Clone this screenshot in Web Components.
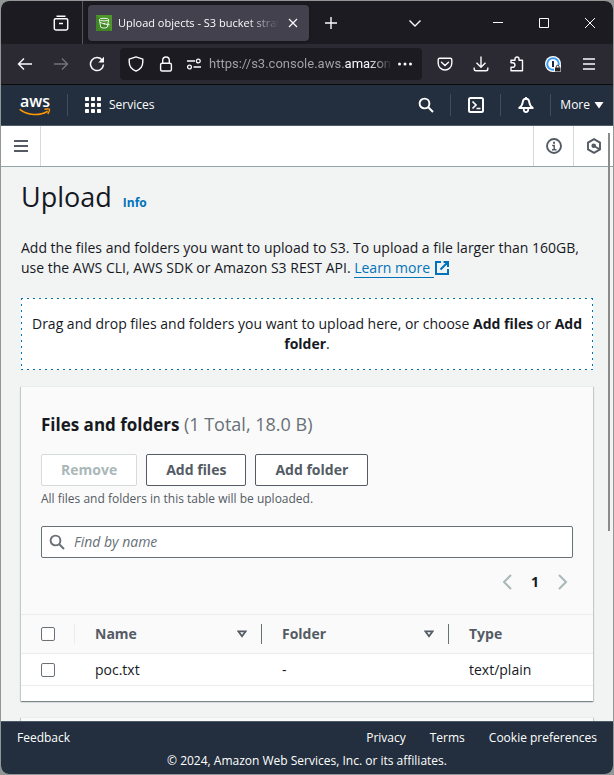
<!DOCTYPE html>
<html lang="en">
<head>
<meta charset="utf-8">
<meta name="viewport" content="width=device-width, initial-scale=1">
<title>Upload objects - S3 bucket</title>
<style>
    html {
        height: 100%;
    }
    body {
        margin: 0;
        padding: 1px;
        box-sizing: border-box;
        height: 100vh;
        background: #929694;
        font-family: "Open Sans", "Noto Sans", sans-serif;
        font-size: 14px;
        line-height: 20px;
        color: #16191f;
        overflow: hidden;
    }
</style>
</head>
<body>
<browser-window>
    <tab-strip slot="chrome"></tab-strip>
    <tool-bar slot="chrome"></tool-bar>
    <aws-nav slot="chrome"></aws-nav>
    <crumb-bar slot="chrome"></crumb-bar>
    <upload-page></upload-page>
    <aws-footer slot="footer"></aws-footer>
</browser-window>

<script>
const ICONS = {
    archive: ['0 0 16 16', `<path d="M3.5 1.2h9M2.5 3.8h11a1.2 1.2 0 0 1 1.2 1.2v8.2a1.8 1.8 0 0 1-1.8 1.8H3.1a1.8 1.8 0 0 1-1.8-1.8V5a1.2 1.2 0 0 1 1.2-1.2zM6 8.5h4" stroke-width="1.5"/>`],
    bucket: ['0 0 16 16', `<rect width="16" height="16" fill="#3f8624" stroke="none"/><path d="M16 0v16L0 0z" fill="#6cae3e" stroke="none" opacity=".4"/><ellipse cx="8" cy="4.6" rx="4.6" ry="1.3" stroke-width=".9"/><path d="M3.4 4.8l1.3 7.4c.8 1.1 5.8 1.1 6.6 0l1.3-7.4M4 7.4l4.5 1.6M11.8 8.8c2 .8 2 1.3-.2.8l-3-.8" stroke-width=".9"/><circle cx="8.3" cy="8.8" r=".8" fill="#fff" stroke="none"/>`],
    x: ['0 0 16 16', `<path d="M4 4l8 8M12 4l-8 8" stroke-width="1.2"/>`],
    plus: ['0 0 16 16', `<path d="M8 2v12M2 8h12" stroke-width="1.4"/>`],
    chevron: ['0 0 16 16', `<path d="M2.5 5.5L8 11l5.5-5.5" stroke-width="1.4"/>`],
    min: ['0 0 16 16', `<path d="M3 7.5h10" stroke-width="1"/>`],
    max: ['0 0 16 16', `<path d="M3.5 3.5h9v9h-9z" stroke-width="1"/>`],
    shut: ['0 0 16 16', `<path d="M3 3l10 10M13 3L3 13" stroke-width="1"/>`],
    back: ['0 0 16 16', `<path d="M15 8H1.5M7 2.5L1.5 8 7 13.5" stroke-width="1.4"/>`],
    forward: ['0 0 16 16', `<path d="M1 8h13.5M9 2.5L14.5 8 9 13.5" stroke-width="1.4"/>`],
    reload: ['0 0 16 16', `<path d="M13.4 4.4A6.5 6.5 0 1 0 14.5 8.5" stroke-width="1.5"/><path d="M15 .8v5.7H9.3z" fill="currentColor" stroke="none"/>`],
    shield: ['0 0 16 16', `<path d="M8 .9l6.8 2.3v2.6c0 4.3-2.5 7.7-6.8 9.4C3.7 13.5 1.2 10.1 1.2 5.8V3.2z" stroke-width="1.4" stroke-linejoin="round"/>`],
    lock: ['0 0 16 16', `<rect x="2.6" y="7.2" width="10.8" height="7.8" rx="1.5" stroke-width="1.4"/><path d="M4.7 7V4.3a3.3 3.3 0 0 1 6.6 0V7" stroke-width="1.4"/>`],
    perms: ['0 0 16 16', `<path d="M1 5h8M7.5 11H15" stroke-width="1.4"/><circle cx="12.3" cy="5" r="1.9" stroke-width="1.3"/><circle cx="3.5" cy="11" r="1.9" stroke-width="1.3"/>`],
    dots: ['0 0 16 16', `<g fill="currentColor" stroke="none"><circle cx="2.5" cy="8" r="1.5"/><circle cx="8" cy="8" r="1.5"/><circle cx="13.5" cy="8" r="1.5"/></g>`],
    pocket: ['0 0 16 16', `<path d="M2.7 2.2h10.6a1.5 1.5 0 0 1 1.5 1.5v3.5a6.8 6.8 0 0 1-13.6 0V3.7a1.5 1.5 0 0 1 1.5-1.5zM4.5 6.2L8 9.5l3.5-3.3" stroke-width="1.4" stroke-linecap="round"/>`],
    download: ['0 0 16 16', `<path d="M8 .5v10.500M3.5 6.700L8 11.200l4.500-4.500M1.200 11.500V13a1.800 1.800 0 0 0 1.800 1.800h10a1.800 1.800 0 0 0 1.800-1.800v-1.500" stroke-width="1.4"/>`],
    puzzle: ['0 0 16 16', `<path d="M2 6.800V4.300h4V3a2 2 0 0 1 4 0v1.300h3.500v10.500H2v-3.500h1.700a2 2 0 0 0 0-4.500H2z" stroke-width="1.4" stroke-linejoin="round"/>`],
    onepass: ['0 0 16 16', `<circle cx="8" cy="8" r="8" fill="#fff" stroke="none"/><circle cx="8" cy="8" r="5.8" stroke="#3b9cf5" stroke-width="2"/><path d="M8 5v6" stroke="#1a2b49" stroke-width="2"/><rect x="9" y="9" width="7" height="7" rx="1" fill="#fff" stroke="none"/><rect x="10" y="11.5" width="5.5" height="4" fill="#222" stroke="none"/><path d="M11.3 11.5v-.8a1.400 1.400 0 0 1 2.800 0v.8" stroke="#222" stroke-width="1"/>`],
    menu: ['0 0 16 16', `<path d="M2 3h12M2 8h12M2 13h12" stroke-width="1.4"/>`],
    grid: ['0 0 16 16', `<g fill="currentColor" stroke="none"><rect width="4" height="4" rx=".8"/><rect x="6" width="4" height="4" rx=".8"/><rect x="12" width="4" height="4" rx=".8"/><rect y="6" width="4" height="4" rx=".8"/><rect x="6" y="6" width="4" height="4" rx=".8"/><rect x="12" y="6" width="4" height="4" rx=".8"/><rect y="12" width="4" height="4" rx=".8"/><rect x="6" y="12" width="4" height="4" rx=".8"/><rect x="12" y="12" width="4" height="4" rx=".8"/></g>`],
    search: ['0 0 16 16', `<circle cx="6.5" cy="6.5" r="4.9" stroke-width="1.9"/><path d="M10 10l5 5" stroke-width="2"/>`],
    terminal: ['0 0 16 16', `<rect x="1" y="1" width="14" height="14" rx="1.5" stroke-width="2"/><path d="M4.5 4.5L8 8l-3.5 3.5M8.5 11.5h4" stroke-width="1.7"/>`],
    bell: ['0 0 16 16', `<path d="M8 1.8c-2 0-3 1.300-3.200 3C4.500 7.800 3.500 9.300 1.200 11h13.600c-2.300-1.700-3.300-3.200-3.600-6.200C11 3.100 10 1.800 8 1.800z" stroke-width="1.9" stroke-linejoin="round"/><path d="M5.8 11.5v1.300a2.200 2.200 0 0 0 4.400 0v-1.300M8 0v2" stroke-width="1.8"/>`],
    caret: ['0 0 10 8', `<path d="M.5 1h9L5 7.5z" fill="currentColor" stroke="none"/>`],
    bars: ['0 0 16 16', `<path d="M1 3h14M1 8h14M1 13h14" stroke-width="2"/>`],
    info: ['0 0 16 16', `<circle cx="8" cy="8" r="7" stroke-width="1.9"/><path d="M6.2 7.5h2V12M6 11.7h4.5" stroke-width="1.5"/><path d="M7 3.7h2v2H7z" fill="currentColor" stroke="none"/>`],
    hexagon: ['0 0 16 16', `<path d="M8 1.2l6 3.4v6.8l-6 3.4-6-3.4V4.6z" stroke-width="1.9"/><circle cx="7.7" cy="7.7" r="2.3" fill="currentColor" stroke="none"/><path d="M8 8l5.5 3.2" stroke-width="1.8"/>`],
    external: ['0 0 16 16', `<path d="M7 2H2v12h12V9M9.5 2H14v5M14 2L6.5 9.5" stroke-width="2"/>`],
    sort: ['0 0 10 8', `<path d="M1.3 1.3h7.4L5 6.3z" stroke-width="1.8"/>`],
    left: ['0 0 16 16', `<path d="M12 1L5 8l7 7" stroke-width="2"/>`],
    right: ['0 0 16 16', `<path d="M4 1l7 7-7 7" stroke-width="2"/>`],
    smile: ['0 0 32 8', `<g stroke="#f90" stroke-width="1.6"><path d="M.7 1.3C9 7.8 20.5 8 28.7 3.2"/><path d="M25.5 1.3c2.5-.5 4.8-.5 5 .1.2.8-.7 3-1.8 4.6" stroke-width="1.4"/></g>`]
};

class UiIcon extends HTMLElement {
    constructor() {
        super();
        this.attachShadow({mode: 'open'});
    }

    connectedCallback() {
        const [box, shapes] = ICONS[this.getAttribute('name')];
        this.shadowRoot.innerHTML = `
        <style>
        :host {
            display: inline-block;
            flex: none;
            width: 16px;
            height: 16px;
        }
        svg {
            display: block;
            width: 100%;
            height: 100%;
        }
        </style>
        <svg viewBox="${box}" fill="none" stroke="currentColor" aria-hidden="true">${shapes}</svg>
        `;
    }
}
customElements.define('ui-icon', UiIcon);

// resets shared by the elements below
const BASE = `
    :host, * {
        box-sizing: border-box;
    }
    button {
        margin: 0;
        padding: 0;
        border: 0;
        background: none;
        font: inherit;
        color: inherit;
        display: flex;
        align-items: center;
        justify-content: center;
    }
    a {
        color: inherit;
        text-decoration: none;
    }
`;

function define(name, css, html) {
    const template = document.createElement('template');
    template.innerHTML = `<style>${BASE}${css}</style>${html}`;
    customElements.define(name, class extends HTMLElement {
        constructor() {
            super();
            this.attachShadow({mode: 'open'}).append(template.content.cloneNode(true));
        }
    });
}

define('browser-window', `
    :host {
        position: relative;
        display: flex;
        flex-direction: column;
        height: 100%;
        border-radius: 8px;
        overflow: hidden;
        background: #f2f3f3;
    }
    main {
        flex: 1;
        min-height: 0;
        overflow: hidden;
    }
    .thumb {
        position: absolute;
        top: 132px;
        right: 3px;
        width: 2px;
        height: 398px;
        background: #8b8b8b;
    }
`, `
    <slot name="chrome"></slot>
    <main><slot></slot></main>
    <slot name="footer"></slot>
    <div class="thumb"></div>
`);

define('tab-strip', `
    :host {
        display: flex;
        align-items: center;
        height: 43px;
        background: #1c1b22;
        color: #fbfbfe;
        font-size: 11px;
    }
    .recent {
        width: 82px;
        height: 100%;
        padding-left: 38px;
        border-right: 1px solid #55545c;
    }
    .tab {
        display: flex;
        align-items: center;
        width: 221px;
        height: 36px;
        margin-left: 5px;
        padding: 0 8px;
        gap: 6px;
        border-radius: 4px;
        background: #42414d;
        box-shadow: 0 0 3px #0006;
    }
    .title {
        flex: 1;
        overflow: hidden;
        white-space: nowrap;
        mask-image: linear-gradient(to left, transparent, #000 32px);
    }
    .new {
        margin-left: 14px;
    }
    .list {
        margin-left: auto;
        margin-right: 52px;
    }
    .win {
        width: 46px;
        height: 100%;
    }
`, `
    <button class="recent" aria-label="Recent browsing"><ui-icon name="archive"></ui-icon></button>
    <div class="tab">
        <ui-icon name="bucket"></ui-icon>
        <span class="title">Upload objects - S3 bucket strat</span>
        <button aria-label="Close tab"><ui-icon name="x"></ui-icon></button>
    </div>
    <button class="new" aria-label="New tab"><ui-icon name="plus"></ui-icon></button>
    <button class="list" aria-label="List all tabs"><ui-icon name="chevron"></ui-icon></button>
    <button class="win" aria-label="Minimize"><ui-icon name="min"></ui-icon></button>
    <button class="win" aria-label="Maximize"><ui-icon name="max"></ui-icon></button>
    <button class="win" aria-label="Close"><ui-icon name="shut"></ui-icon></button>
`);

define('tool-bar', `
    :host {
        display: flex;
        align-items: center;
        height: 41px;
        padding: 0 6px;
        background: #2b2a33;
        border-bottom: 1px solid #0c0c0d;
        color: #fbfbfe;
    }
    button {
        width: 36px;
        height: 32px;
    }
    button[disabled] {
        color: #74737c;
    }
    .url {
        flex: 1;
        display: flex;
        align-items: center;
        height: 32px;
        min-width: 0;
        margin: 0 5px;
        border-radius: 4px;
        background: #1c1b22;
    }
    .url button {
        width: 28px;
    }
    .url button:first-child {
        width: 32px;
    }
    .url button:last-child {
        width: 30px;
        padding-right: 4px;
    }
    .address {
        flex: 1;
        overflow: hidden;
        white-space: nowrap;
        font-family: Roboto, "Open Sans", sans-serif;
        font-size: 13px;
        color: #a09fa6;
        padding-left: 1px;
        mask-image: linear-gradient(to left, transparent, #000 24px);
    }
    .address b {
        font-weight: 400;
        color: #fbfbfe;
    }
`, `
    <button aria-label="Back"><ui-icon name="back"></ui-icon></button>
    <button aria-label="Forward" disabled><ui-icon name="forward"></ui-icon></button>
    <button aria-label="Reload"><ui-icon name="reload"></ui-icon></button>
    <div class="url">
        <button aria-label="Tracking protection"><ui-icon name="shield"></ui-icon></button>
        <button aria-label="Site security"><ui-icon name="lock"></ui-icon></button>
        <button aria-label="Permissions"><ui-icon name="perms"></ui-icon></button>
        <span class="address">https://s3.console.aws.<b>amazon</b></span>
        <button aria-label="Page actions"><ui-icon name="dots"></ui-icon></button>
    </div>
    <button aria-label="Save to Pocket"><ui-icon name="pocket"></ui-icon></button>
    <button aria-label="Downloads"><ui-icon name="download"></ui-icon></button>
    <button aria-label="Extensions"><ui-icon name="puzzle"></ui-icon></button>
    <button aria-label="Passwords"><ui-icon name="onepass"></ui-icon></button>
    <button aria-label="Application menu"><ui-icon name="menu"></ui-icon></button>
`);

define('aws-nav', `
    :host {
        display: flex;
        align-items: center;
        height: 41px;
        padding-left: 18px;
        padding-right: 9px;
        background: #232f3e;
        border-bottom: 1px solid #4c5966;
        color: #fff;
        font-size: 12px;
    }
    .logo {
        display: flex;
        flex-direction: column;
        align-items: center;
        width: 32px;
        font-size: 16px;
        font-weight: 600;
        line-height: 13px;
    }
    .logo ui-icon {
        width: 32px;
        height: 8px;
    }
    hr {
        width: 1px;
        height: 22px;
        margin: 0;
        border: 0;
        background: #414d5c;
    }
    .logo + hr {
        margin: 0 17px 0 16px;
    }
    .services {
        gap: 8px;
        margin-right: auto;
    }
    .icon {
        width: 49px;
    }
    .more {
        gap: 4px;
        padding-left: 9px;
    }
    .more ui-icon {
        width: 10px;
        height: 8px;
    }
`, `
    <a class="logo" href="#">aws<ui-icon name="smile"></ui-icon></a>
    <hr>
    <button class="services"><ui-icon name="grid"></ui-icon>Services</button>
    <button class="icon" aria-label="Search"><ui-icon name="search"></ui-icon></button>
    <hr>
    <button class="icon" aria-label="CloudShell"><ui-icon name="terminal"></ui-icon></button>
    <hr>
    <button class="icon" aria-label="Notifications"><ui-icon name="bell"></ui-icon></button>
    <hr>
    <button class="more">More<ui-icon name="caret"></ui-icon></button>
`);

define('crumb-bar', `
    :host {
        display: flex;
        height: 41px;
        background: #fff;
        border-bottom: 1px solid #95a5a6;
        color: #545b64;
    }
    button {
        width: 40px;
        border-left: 1px solid #d5dbdb;
    }
    .open {
        margin-right: auto;
        border-left: 0;
        border-right: 1px solid #d5dbdb;
    }
`, `
    <button class="open" aria-label="Open navigation"><ui-icon name="bars"></ui-icon></button>
    <button aria-label="Info"><ui-icon name="info"></ui-icon></button>
    <button aria-label="Tutorials"><ui-icon name="hexagon"></ui-icon></button>
`);

// the dashes are gradients, so that their length does not depend on the browser
define('drop-zone', `
    :host {
        --across: repeating-linear-gradient(to right, #0073bb 0 2px, transparent 2px 6px);
        --down: repeating-linear-gradient(to bottom, #0073bb 0 2px, transparent 2px 6px);
        display: block;
        padding: 16px 6px;
        background:
            var(--across) top / 100% 1px no-repeat,
            var(--across) bottom / 100% 1px no-repeat,
            var(--down) left / 1px 100% no-repeat,
            var(--down) right / 1px 100% no-repeat,
            #fff;
        text-align: center;
    }
`, `<slot></slot>`);

define('content-card', `
    :host {
        display: block;
        background: #fafafa;
        border-top: 1px solid #eaeded;
        box-shadow: 0 1px 1px 0 #001c244d, 1px 1px 1px 0 #001c2426, -1px 1px 1px 0 #001c2426;
    }
`, `<slot></slot>`);

define('files-panel', `
    :host {
        display: block;
        padding-bottom: 15px;
        background: #fff;
    }
    .head {
        padding: 19px 20px 20px;
        background: #fafafa;
    }
    h2 {
        margin: 0;
        font-size: 17px;
        line-height: 36px;
    }
    h2 span {
        font-size: 18px;
        font-weight: 400;
        color: #687078;
    }
    .actions {
        display: flex;
        gap: 9px;
        margin-top: 11px;
    }
    .actions button {
        height: 32px;
        padding: 0 19px;
        border: 1px solid #545b64;
        border-radius: 2px;
        background: #fff;
        color: #545b64;
        font-weight: 700;
    }
    .actions button[disabled] {
        border-color: #d5dbdb;
        color: #aab7b8;
    }
    p {
        margin: 3px 0 0;
        font-size: 12px;
        color: #545b64;
    }
    .search {
        display: flex;
        align-items: center;
        gap: 9px;
        height: 32px;
        margin-top: 17px;
        padding: 0 7px;
        border: 1px solid #687078;
        border-radius: 2px;
        background: #fff;
        color: #687078;
    }
    .search input {
        flex: 1;
        min-width: 0;
        padding: 0;
        border: 0;
        outline: 0;
        background: none;
        font: inherit;
        color: #16191f;
    }
    .search input::placeholder {
        color: #687078;
        opacity: 1;
        font-style: italic;
    }
    nav {
        display: flex;
        justify-content: flex-end;
        align-items: center;
        height: 24px;
        margin-top: 12px;
        padding-right: 2px;
        gap: 16px;
        color: #aab7b8;
        font-weight: 700;
    }
    nav a {
        color: #16191f;
    }
    table {
        width: 100%;
        table-layout: fixed;
        border-collapse: collapse;
    }
    th, td {
        padding: 0;
        text-align: left;
        border-bottom: 1px solid #eaeded;
    }
    th {
        background: #fafafa;
        border-top: 1px solid #eaeded;
        color: #545b64;
    }
    .cell {
        display: flex;
        align-items: center;
        height: 38px;
        padding-left: 20px;
    }
    td .cell {
        height: 31px;
    }
    th .cell::after {
        content: "";
        width: 1px;
        height: 20px;
        background: #687078;
    }
    th:first-child .cell::after {
        margin-left: auto;
        background: #eaeded;
    }
    th:last-child .cell::after {
        display: none;
    }
    .sort {
        flex: 1;
        justify-content: space-between;
        padding-right: 14px;
        font-weight: 700;
    }
    .sort ui-icon {
        width: 10px;
        height: 8px;
    }
    .check {
        width: 54px;
    }
    .col {
        width: 187px;
    }
    input[type=checkbox] {
        appearance: none;
        width: 14px;
        height: 14px;
        margin: 0;
        border: 1px solid #687078;
        border-radius: 2px;
        background: #fff;
    }
`, `
    <div class="head">
        <h2>Files and folders <span>(1 Total, 18.0 B)</span></h2>
        <div class="actions">
            <button disabled>Remove</button>
            <button>Add files</button>
            <button>Add folder</button>
        </div>
        <p>All files and folders in this table will be uploaded.</p>
        <label class="search">
            <ui-icon name="search"></ui-icon>
            <input type="text" placeholder="Find by name" aria-label="Find by name">
        </label>
        <nav>
            <button aria-label="Previous page" disabled><ui-icon name="left"></ui-icon></button>
            <a href="#">1</a>
            <button aria-label="Next page" disabled><ui-icon name="right"></ui-icon></button>
        </nav>
    </div>
    <table>
        <colgroup><col class="check"><col class="col"><col class="col"><col></colgroup>
        <thead>
            <tr>
                <th><div class="cell"><input type="checkbox" aria-label="Select all"></div></th>
                <th><div class="cell"><button class="sort">Name<ui-icon name="sort"></ui-icon></button></div></th>
                <th><div class="cell"><button class="sort">Folder<ui-icon name="sort"></ui-icon></button></div></th>
                <th><div class="cell">Type</div></th>
            </tr>
        </thead>
        <tbody>
            <tr>
                <td><div class="cell"><input type="checkbox" aria-label="Select poc.txt"></div></td>
                <td><div class="cell">poc.txt</div></td>
                <td><div class="cell">-</div></td>
                <td><div class="cell">text/plain</div></td>
            </tr>
        </tbody>
    </table>
`);

define('upload-page', `
    :host {
        display: block;
        padding: 12px 20px 0;
    }
    header {
        display: flex;
        align-items: baseline;
        gap: 11px;
    }
    h1 {
        margin: 0;
        font-size: 27px;
        font-weight: 400;
        line-height: 36px;
    }
    header a {
        font-size: 12px;
        font-weight: 700;
        color: #0073bb;
    }
    p {
        margin: 23px 0 20px;
    }
    p a {
        color: #0073bb;
    }
    p a span {
        border-bottom: 1px solid #0073bb;
    }
    p ui-icon {
        vertical-align: -3px;
    }
    content-card {
        margin-top: 16px;
    }
    .next {
        height: 80px;
    }
`, `
    <header><h1>Upload</h1><a href="#">Info</a></header>
    <p>Add the files and folders you want to upload to S3. To upload a file larger than 160GB, use the AWS CLI, AWS SDK or Amazon S3 REST API. <a href="#"><span>Learn more </span><ui-icon name="external"></ui-icon></a></p>
    <drop-zone>Drag and drop files and folders you want to upload here, or choose <b>Add files</b> or <b>Add folder</b>.</drop-zone>
    <content-card><files-panel></files-panel></content-card>
    <content-card><div class="next"></div></content-card>
`);

define('aws-footer', `
    :host {
        display: block;
        padding: 6px 16px 3px;
        border-top: 1px solid #4c5966;
        background: #232f3e;
        color: #fff;
        font-size: 12px;
    }
    .links {
        display: flex;
        gap: 24px;
    }
    .links .feedback {
        margin-right: auto;
    }
    .copy {
        margin-top: 3px;
        text-align: center;
    }
`, `
    <div class="links">
        <a class="feedback" href="#">Feedback</a>
        <a href="#">Privacy</a>
        <a href="#">Terms</a>
        <a href="#">Cookie preferences</a>
    </div>
    <div class="copy">© 2024, Amazon Web Services, Inc. or its affiliates.</div>
`);
</script>
</body>
</html>
